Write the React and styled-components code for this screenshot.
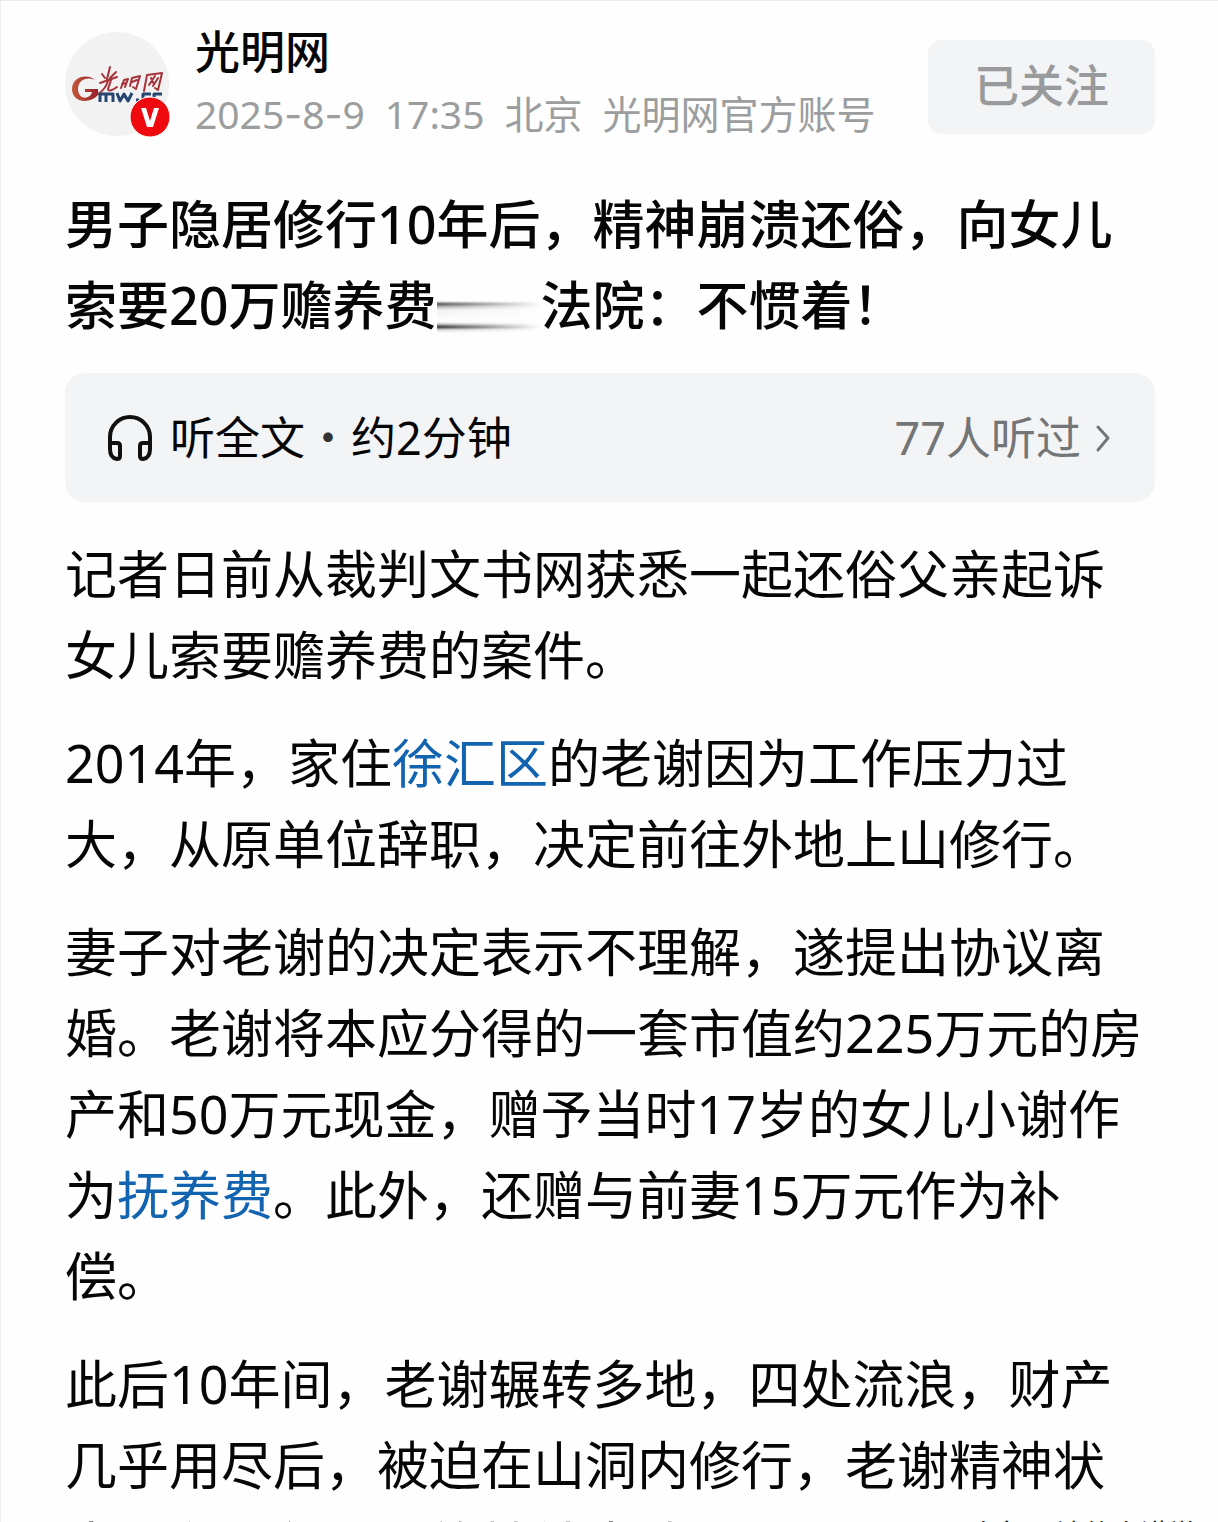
import React from "react";
import styled, { createGlobalStyle } from "styled-components";

const Global = createGlobalStyle`
  * { box-sizing: border-box; }
  html, body { margin: 0; background: #fefefe; height: 100%; }
  #root { height: 100%; }
  body, button {
    font-family: "Noto Sans", "Noto Sans CJK SC", sans-serif;
    color: #060606;
  }
`;

const Page = styled.main`
  position: relative;
  height: 100%;
  overflow: hidden;
  padding: 0 63px 0 64px;
  border-top: 1px solid #ebebeb;
  border-left: 1px solid #f1f1f1;
`;

const Header = styled.header`
  display: flex;
  align-items: flex-start;
  padding-top: 23px;
`;

const Avatar = styled.div`
  position: relative;
  flex: none;
  width: 104px;
  height: 104px;
  margin: 8px 26px 0 0;
  border-radius: 50%;
  background: #f2f2f2;
`;

const Logo = styled.svg`
  display: block;
  width: 104px;
  height: 104px;
`;

const Badge = styled.svg`
  position: absolute;
  right: -2px;
  bottom: -2px;
  width: 42px;
  height: 42px;
`;

const Author = styled.div`
  flex: 1;
  min-width: 0;
`;

const Name = styled.div`
  font-size: 45px;
  line-height: 56px;
  font-weight: 500;
`;

const Meta = styled.div`
  display: flex;
  gap: 20px;
  margin-top: 6px;
  font-size: 39px;
  line-height: 56px;
  color: #9b9d9f;
  white-space: nowrap;
`;

const Hyphen = styled.span`
  font-family: Inter, sans-serif;
`;

const Follow = styled.button`
  flex: none;
  width: 227px;
  height: 94px;
  margin-top: 16px;
  padding: 0 0 8px;
  border: 0;
  border-radius: 14px;
  background: #f3f4f6;
  color: #999a9b;
  font-size: 45px;
  font-weight: 500;
`;

const Title = styled.h1`
  margin: 40px 0 28px;
  font-size: 52px;
  line-height: 81px;
  font-weight: 500;
`;

const Smear = styled.span`
  display: inline-block;
  width: 104px;
  height: 34px;
  vertical-align: -8px;
  background:
    linear-gradient(90deg, transparent, #fefefe),
    linear-gradient(#fefefe 0 2px, #555 5px, #bbb 8px, #f2f2f2 11px, #fefefe 22px, #eee 24px, #333 28px, #ddd 31px, #fefefe 34px);
`;

const Listen = styled.button`
  display: flex;
  align-items: center;
  width: 100%;
  height: 129px;
  padding: 0 44px 0 43px;
  border: 0;
  border-radius: 20px;
  background: #f3f4f6;
  font-size: 45px;
  text-align: left;
`;

const HeadphoneIcon = styled.svg`
  width: 44px;
  height: 46px;
  margin-right: 18px;
`;

const Label = styled.span`
  display: flex;
  padding-bottom: 4px;
`;

const Dot = styled.span`
  width: 46px;
  text-align: center;
  font-family: "Noto Sans CJK SC", sans-serif;
  font-weight: 400;
  color: #333;
`;

const Count = styled(Label)`
  margin-left: auto;
  color: #747577;
`;

const Chevron = styled.svg`
  width: 16px;
  height: 30px;
  margin-left: 14px;
`;

const Article = styled.article`
  padding-top: 31px;
`;

const Paragraph = styled.p`
  margin: 0 0 27px;
  font-size: 52px;
  line-height: 81px;
`;

const Term = styled.a`
  color: #1264b0;
  text-decoration: none;
`;

const Watermark = styled.div`
  position: absolute;
  right: 22px;
  bottom: -32px;
  font-size: 28px;
  line-height: 40px;
  color: #222;
`;

export default function App() {
  return (
    <>
      <Global />
      <Page>
        <Header>
          <Avatar>
            <Logo viewBox="0 0 104 104" aria-label="光明网">
              <defs>
                <linearGradient id="g" x1="0" x2="1">
                  <stop offset="0" stopColor="#c2593a" />
                  <stop offset="1" stopColor="#96202a" />
                </linearGradient>
              </defs>
              <path d="M30 48C22 41 7 45 7 57C7 70 24 73 33 63V57H20V60H27C25 68 13 68 13 57C13 48 22 44 30 48Z" fill="url(#g)" />
              <g fill="none" stroke="#a8323a" strokeWidth="2" strokeLinecap="round" strokeLinejoin="round">
                <path d="M45 35L42 47M37 42L40 46M51 40L45 46M35 51L52 45M43 49C41 55 38 59 33 62M46 48L43 57C43 60 48 58 52 55" />
                <path d="M59 48L56 56M59 48L63 47L60 55M57 52L61 51M67 46L65 54M67 46L75 44L71 57L68 55M67 50L72 48" />
                <path d="M82 43L79 59M82 43L97 41L93 58L90 56M86 46L89 52M90 44L84 53M93 46L88 54" />
              </g>
              <path d="M35 70V62H48V70M41 62V70M52 61L55 69L59 62L63 69L67 61M71 68H74M86 62H78V69H86M89 70V62H97" fill="none" stroke="#25476f" strokeWidth="3" strokeLinejoin="round" />
            </Logo>
            <Badge viewBox="0 0 42 42" aria-label="已认证">
              <circle cx="21" cy="21" r="20" fill="#ee0a0e" stroke="#fefefe" strokeWidth="1" />
              <path d="M12 12H17L21 25L25 12H30L24 31H18Z" fill="#fff" />
            </Badge>
          </Avatar>
          <Author>
            <Name>光明网</Name>
            <Meta>
              <time dateTime="2025-08-09">
                2025<Hyphen>-</Hyphen>8<Hyphen>-</Hyphen>9
              </time>
              <span>17:35</span>
              <span>北京</span>
              <span>光明网官方账号</span>
            </Meta>
          </Author>
          <Follow type="button">已关注</Follow>
        </Header>

        <Title>
          男子隐居修行10年后，精神崩溃还俗，向女儿索要20万赡养费
          <Smear aria-hidden="true" />
          法院：不惯着！
        </Title>

        <Listen type="button">
          <HeadphoneIcon viewBox="0 0 44 46" fill="none" stroke="#101010" strokeWidth="4" strokeLinejoin="round" aria-hidden="true">
            <path d="M2 34V22A20 20 0 0 1 42 22V34" />
            <path d="M2 28H9Q12 28 12 31V41Q12 44 9 44Q2 43 2 34ZM42 28H35Q32 28 32 31V41Q32 44 35 44Q42 43 42 34Z" />
          </HeadphoneIcon>
          <Label>
            <span>听全文</span>
            <Dot>·</Dot>
            <span>约2分钟</span>
          </Label>
          <Count>77人听过</Count>
          <Chevron viewBox="0 0 16 30" fill="none" stroke="#747577" strokeWidth="3" strokeLinecap="round" strokeLinejoin="round" aria-hidden="true">
            <path d="M3 4L13 15L3 27" />
          </Chevron>
        </Listen>

        <Article>
          <Paragraph>记者日前从裁判文书网获悉一起还俗父亲起诉女儿索要赡养费的案件。</Paragraph>
          <Paragraph>
            2014年，家住<Term href="#xuhui">徐汇区</Term>的老谢因为工作压力过大，从原单位辞职，决定前往外地上山修行。
          </Paragraph>
          <Paragraph>
            妻子对老谢的决定表示不理解，遂提出协议离婚。老谢将本应分得的一套市值约225万元的房产和50万元现金，赠予当时17岁的女儿小谢作为
            <Term href="#support">抚养费</Term>。此外，还赠与前妻15万元作为补偿。
          </Paragraph>
          <Paragraph>此后10年间，老谢辗转多地，四处流浪，财产几乎用尽后，被迫在山洞内修行，老谢精神状态逐渐恶化，最终精神崩溃。</Paragraph>
        </Article>
        <Watermark>头条 @法律小讲堂</Watermark>
      </Page>
    </>
  );
}
